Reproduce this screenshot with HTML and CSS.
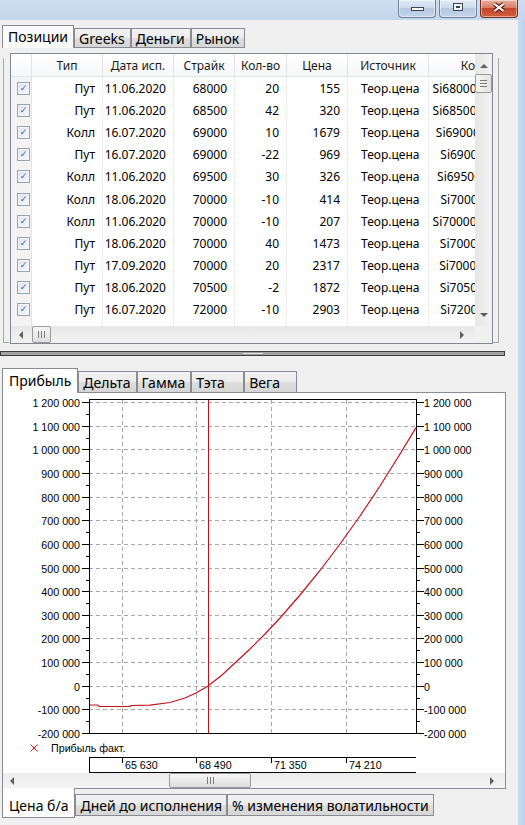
FILE: index.html
```html
<!DOCTYPE html>
<html lang="ru">
<head>
<meta charset="utf-8">
<title>Позиции</title>
<link rel="stylesheet" href="styles.css">
</head>
<body>
<div class="window">
  <div class="titlebar">
    <div class="wbtn"><span class="ico-min"></span></div>
    <div class="wbtn"><span class="ico-max"></span></div>
    <div class="wbtn close">
      <svg width="16" height="11" viewBox="0 0 16 11"><path d="M3.5 2 L12.5 9 M12.5 2 L3.5 9" stroke="#5b1c12" stroke-width="4.2" fill="none"/><path d="M3.5 2 L12.5 9 M12.5 2 L3.5 9" stroke="#fff" stroke-width="2.2" fill="none"/></svg>
    </div>
  </div>
  <div class="frame">
    <div class="content">
      <div class="tabstrip ts1">
        <div class="tab active">Позиции</div>
        <div class="tab">Greeks</div>
        <div class="tab">Деньги</div>
        <div class="tab">Рынок</div>
      </div>
      <div class="page1">
        <div class="bracket bl"></div>
        <div class="lv">
          <div class="lv-view">
            <div class="lv-row lv-head">
              <div class="c"></div><div class="c">Тип</div><div class="c">Дата исп.</div><div class="c">Страйк</div><div class="c">Кол-во</div><div class="c">Цена</div><div class="c">Источник</div><div class="c">Код</div>
            </div>
            <div class="lv-row"><div class="c ck"><span class="chk"></span></div><div class="c r">Пут</div><div class="c r">11.06.2020</div><div class="c r">68000</div><div class="c r">20</div><div class="c r">155</div><div class="c l">Теор.цена</div><div class="c m">Si68000BR0A</div></div>
            <div class="lv-row"><div class="c ck"><span class="chk"></span></div><div class="c r">Пут</div><div class="c r">11.06.2020</div><div class="c r">68500</div><div class="c r">42</div><div class="c r">320</div><div class="c l">Теор.цена</div><div class="c m">Si68500BR0A</div></div>
            <div class="lv-row"><div class="c ck"><span class="chk"></span></div><div class="c r">Колл</div><div class="c r">16.07.2020</div><div class="c r">69000</div><div class="c r">10</div><div class="c r">1679</div><div class="c l">Теор.цена</div><div class="c m">Si69000BG0</div></div>
            <div class="lv-row"><div class="c ck"><span class="chk"></span></div><div class="c r">Пут</div><div class="c r">16.07.2020</div><div class="c r">69000</div><div class="c r">-22</div><div class="c r">969</div><div class="c l">Теор.цена</div><div class="c m">Si69000BS</div></div>
            <div class="lv-row"><div class="c ck"><span class="chk"></span></div><div class="c r">Колл</div><div class="c r">11.06.2020</div><div class="c r">69500</div><div class="c r">30</div><div class="c r">326</div><div class="c l">Теор.цена</div><div class="c m">Si69500BF0</div></div>
            <div class="lv-row"><div class="c ck"><span class="chk"></span></div><div class="c r">Колл</div><div class="c r">18.06.2020</div><div class="c r">70000</div><div class="c r">-10</div><div class="c r">414</div><div class="c l">Теор.цена</div><div class="c m">Si70000BF</div></div>
            <div class="lv-row"><div class="c ck"><span class="chk"></span></div><div class="c r">Колл</div><div class="c r">11.06.2020</div><div class="c r">70000</div><div class="c r">-10</div><div class="c r">207</div><div class="c l">Теор.цена</div><div class="c m">Si70000BR0A</div></div>
            <div class="lv-row"><div class="c ck"><span class="chk"></span></div><div class="c r">Пут</div><div class="c r">18.06.2020</div><div class="c r">70000</div><div class="c r">40</div><div class="c r">1473</div><div class="c l">Теор.цена</div><div class="c m">Si70000BR</div></div>
            <div class="lv-row"><div class="c ck"><span class="chk"></span></div><div class="c r">Пут</div><div class="c r">17.09.2020</div><div class="c r">70000</div><div class="c r">20</div><div class="c r">2317</div><div class="c l">Теор.цена</div><div class="c m">Si70000BU</div></div>
            <div class="lv-row"><div class="c ck"><span class="chk"></span></div><div class="c r">Пут</div><div class="c r">18.06.2020</div><div class="c r">70500</div><div class="c r">-2</div><div class="c r">1872</div><div class="c l">Теор.цена</div><div class="c m">Si70500BR</div></div>
            <div class="lv-row"><div class="c ck"><span class="chk"></span></div><div class="c r">Пут</div><div class="c r">16.07.2020</div><div class="c r">72000</div><div class="c r">-10</div><div class="c r">2903</div><div class="c l">Теор.цена</div><div class="c m">Si72000BS</div></div>
            <div class="lv-row"><div class="c ck"><span class="chk"></span></div><div class="c r">Колл</div><div class="c r">16.07.2020</div><div class="c r">72000</div><div class="c r">10</div><div class="c r">611</div><div class="c l">Теор.цена</div><div class="c m">Si72000BG</div></div>
          </div>
          <div class="vscroll">
            <div class="sb-btn up"><span class="arr arr-up"></span></div>
            <div class="thumb-v"><span class="grip-h"></span></div>
            <div class="sb-fill"></div>
            <div class="sb-btn down"><span class="arr arr-down"></span></div>
          </div>
          <div class="hscroll hs1">
            <div class="sb-btn hb"><span class="arr arr-left"></span></div>
            <div class="thumb-h t1"><span class="grip-v"></span></div>
            <div class="sb-fill"></div>
            <div class="sb-btn hb right"><span class="arr arr-right"></span></div>
          </div>
          <div class="corner"></div>
        </div>
        <div class="bracket br"></div>
      </div>
      <div class="splitter"><span class="grip"></span></div>
      <div class="tabstrip ts2">
        <div class="tab active">Прибыль</div>
        <div class="tab">Дельта</div>
        <div class="tab">Гамма</div>
        <div class="tab">Тэта</div>
        <div class="tab">Вега</div>
      </div>
      <div class="page2">
        <svg class="chart" width="502" height="380" viewBox="3 393 502 380">
          <g class="grid" stroke="#a9a9a9" stroke-dasharray="4 3" fill="none">
            <path d="M89 402.5H416M89 426.5H416M89 449.5H416M89 473.5H416M89 497.5H416M89 520.5H416M89 544.5H416M89 568.5H416M89 591.5H416M89 615.5H416M89 638.5H416M89 662.5H416M89 686.5H416M89 709.5H416"/>
            <path d="M122.5 400V733M196.5 400V733M271.5 400V733M346.5 400V733"/>
          </g>
          <g stroke="#000" fill="none" shape-rendering="crispEdges">
            <rect x="89.5" y="399.5" width="327" height="334"/>
            <path d="M82 402.5H89M82 426.5H89M82 449.5H89M82 473.5H89M82 497.5H89M82 520.5H89M82 544.5H89M82 568.5H89M82 591.5H89M82 615.5H89M82 638.5H89M82 662.5H89M82 686.5H89M82 709.5H89M82 733.5H89"/>
            <path d="M86 414.5H89M86 438.5H89M86 461.5H89M86 485.5H89M86 509.5H89M86 532.5H89M86 556.5H89M86 580.5H89M86 603.5H89M86 627.5H89M86 650.5H89M86 674.5H89M86 698.5H89M86 721.5H89"/>
            <path d="M417 402.5H424M417 426.5H424M417 449.5H424M417 473.5H424M417 497.5H424M417 520.5H424M417 544.5H424M417 568.5H424M417 591.5H424M417 615.5H424M417 638.5H424M417 662.5H424M417 686.5H424M417 709.5H424M417 733.5H424"/>
            <path d="M417 414.5H420M417 438.5H420M417 461.5H420M417 485.5H420M417 509.5H420M417 532.5H420M417 556.5H420M417 580.5H420M417 603.5H420M417 627.5H420M417 650.5H420M417 674.5H420M417 698.5H420M417 721.5H420"/>
            <path d="M89 757.5H416M89 772.5H416M89.5 757V773M122.5 758V763M196.5 758V763M271.5 758V763M346.5 758V763"/>
          </g>
          <path d="M208.5 400V733" stroke="#c0141c" stroke-width="1" shape-rendering="crispEdges"/>
          <polyline fill="none" stroke="#c0141c" stroke-width="1.2" points="90,705 98,705 99,706.5 130,706.5 131,705.5 150,705.2 170,702.5 185,698 196,693 208,686 222,675 236,662 250,649 265,634 280,618 300,595 320,570.5 340,544 360,516 380,486 390,470 400,454 416,427.6"/>
          <g class="lbl lbl-l" text-anchor="end">
            <text x="80" y="406.5">1 200 000</text>
            <text x="80" y="430.5">1 100 000</text>
            <text x="80" y="453.5">1 000 000</text>
            <text x="80" y="477.5">900 000</text>
            <text x="80" y="501.5">800 000</text>
            <text x="80" y="524.5">700 000</text>
            <text x="80" y="548.5">600 000</text>
            <text x="80" y="572.5">500 000</text>
            <text x="80" y="595.5">400 000</text>
            <text x="80" y="619.5">300 000</text>
            <text x="80" y="642.5">200 000</text>
            <text x="80" y="666.5">100 000</text>
            <text x="80" y="690.5">0</text>
            <text x="80" y="713.5">-100 000</text>
            <text x="80" y="737.5">-200 000</text>
          </g>
          <g class="lbl lbl-r">
            <text x="424" y="406.5">1 200 000</text>
            <text x="424" y="430.5">1 100 000</text>
            <text x="424" y="453.5">1 000 000</text>
            <text x="424" y="477.5">900 000</text>
            <text x="424" y="501.5">800 000</text>
            <text x="424" y="524.5">700 000</text>
            <text x="424" y="548.5">600 000</text>
            <text x="424" y="572.5">500 000</text>
            <text x="424" y="595.5">400 000</text>
            <text x="424" y="619.5">300 000</text>
            <text x="424" y="642.5">200 000</text>
            <text x="424" y="666.5">100 000</text>
            <text x="424" y="690.5">0</text>
            <text x="424" y="713.5">-100 000</text>
            <text x="424" y="737.5">-200 000</text>
          </g>
          <path d="M30.5 744.5L37.5 751.5M37.5 744.5L30.5 751.5" stroke="#d02020" stroke-width="1"/>
          <g class="lbl">
            <text x="51" y="752">Прибыль факт.</text>
            <text x="125" y="769">65 630</text>
            <text x="199" y="769">68 490</text>
            <text x="274" y="769">71 350</text>
            <text x="349" y="769">74 210</text>
          </g>
        </svg>
        <div class="hscroll hs2">
          <div class="sb-btn hb"><span class="arr arr-left"></span></div>
          <div class="thumb-h t2"><span class="grip-v"></span></div>
          <div class="sb-fill"></div>
          <div class="sb-btn hb right"><span class="arr arr-right"></span></div>
        </div>
      </div>
      <div class="tabstrip ts3">
        <div class="tab active">Цена б/а</div>
        <div class="tab">Дней до исполнения</div>
        <div class="tab">% изменения волатильности</div>
      </div>
    </div>
    <div class="rframe"></div>
  </div>
</div>
</body>
</html>
```
FILE: styles.css
```css
html, body {
  margin: 0;
  padding: 0;
  width: 525px;
  height: 825px;
  overflow: hidden;
  background: #f0f0f0;
}
body {
  font-family: "Noto Sans", "DejaVu Sans", sans-serif;
  color: #000;
}
.window {
  width: 525px;
  height: 825px;
  display: flex;
  flex-direction: column;
}

/* title bar */
.titlebar {
  height: 20px;
  flex: none;
  display: flex;
  justify-content: flex-end;
  gap: 3px;
  padding-right: 7px;
  background: linear-gradient(#cfdff1, #c2d6ec);
}
.wbtn {
  width: 38px;
  height: 18px;
  box-sizing: border-box;
  border: 1px solid #71819a;
  border-top: none;
  border-radius: 0 0 4px 4px;
  display: flex;
  align-items: center;
  justify-content: center;
  background: linear-gradient(#e2ebf6 0%, #cddbec 45%, #b6c9e0 50%, #c3d5ea 100%);
  box-shadow: inset 0 0 0 1px rgba(255,255,255,0.45);
}
.wbtn.close {
  border-color: #7d2a1e;
  background: linear-gradient(#eab0a2 0%, #db7b66 45%, #c6452c 50%, #d0603f 100%);
  align-items: flex-start;
  padding-top: 2px;
}
.ico-min {
  width: 13px;
  height: 4px;
  box-sizing: border-box;
  border: 1px solid #3b4655;
  background: #fff;
  margin-top: 1px;
}
.ico-max {
  width: 10px;
  height: 8px;
  box-sizing: border-box;
  border: 1px solid #3b4655;
  background: linear-gradient(#3b4655, #3b4655) center / 4px 2px no-repeat, #eef3f9;
  margin-bottom: 3px;
}

/* frame */
.frame {
  flex: 1;
  display: flex;
}
.content {
  width: 518px;
  display: flex;
  flex-direction: column;
  background: #f0f0f0;
}
.rframe {
  width: 7px;
  background: linear-gradient(90deg, #c8dbf0, #bcd2ec);
}

/* tabs */
.tabstrip {
  display: flex;
  padding-left: 2px;
  box-sizing: border-box;
  flex: none;
}
.tab {
  box-sizing: border-box;
  border: 1px solid #898c95;
  padding: 0 5px 0 4px;
  min-width: 53px;
  display: flex;
  align-items: center;
  font-size: 14px;
  white-space: nowrap;
  background: linear-gradient(#f3f3f3 0%, #ebebeb 50%, #dedede 51%, #d6d6d6 100%);
}
.tab.active {
  background: #fff;
  position: relative;
  z-index: 1;
  padding: 0 5px;
}
.ts1 {
  height: 28px;
  align-items: flex-end;
}
.ts1 .tab { height: 20px; }
.ts1 .tab.active {
  height: 23px;
  border-bottom: none;
  background: #fbfbfb;
  padding-bottom: 2px;
}
.ts2 {
  height: 36px;
  align-items: flex-end;
}
.ts2 .tab {
  height: 21px;
  border-bottom: none;
}
.ts2 .tab.active {
  height: 25px;
  margin-bottom: -1px;
  padding: 0 6px 2px 6px;
}
.ts3 {
  margin-top: -1px;
  align-items: flex-start;
}
.ts3 .tab {
  height: 22px;
  margin-top: 6px;
  padding: 1px 4px 0 4px;
}
.ts3 .tab.active {
  height: 30px;
  margin-top: 0;
  border-top: none;
  padding: 5px 6px 0 6px;
}

/* page 1 */
.page1 {
  height: 297px;
  box-sizing: border-box;
  padding-top: 5px;
  display: flex;
  align-items: flex-start;
  flex: none;
}
.bracket {
  width: 6px;
  height: 285px;
  margin-top: 5px;
  box-sizing: border-box;
  border-bottom: 1px solid #a7a7a7;
}
.bracket.bl {
  margin-left: 3px;
  margin-right: 1px;
  border-left: 1px solid #a7a7a7;
  width: 6px;
}
.bracket.br {
  border-right: 1px solid #a7a7a7;
}
.lv {
  display: grid;
  grid-template-columns: 464px 17px;
  grid-template-rows: 272px 17px;
  border: 1px solid #828790;
  background: #fff;
  flex: none;
}
.lv-view {
  overflow: hidden;
  font-size: 12px;
}
.lv-row {
  display: grid;
  grid-template-columns: 21px 71px 71px 61px 52px 61px 81px 86px;
  height: 22.2px;
  width: 504px;
}
.lv-row .c {
  box-sizing: border-box;
  border-right: 1px solid #eeeeee;
  display: flex;
  align-items: center;
  white-space: nowrap;
  overflow: hidden;
}
.lv-head {
  height: 23px;
  background: linear-gradient(#ffffff, #f6f7f9);
  border-bottom: 1px solid #e2e4e8;
  box-sizing: border-box;
}
.lv-head .c {
  justify-content: center;
  border-right-color: #e1e3e6;
  color: #1a1a1a;
}
.c.r { justify-content: flex-end; padding-right: 7px; }
.c.l { justify-content: flex-start; padding-left: 13px; }
.c.m { justify-content: center; padding-right: 4px; }
.c.ck {
  justify-content: flex-end;
  padding-right: 1px;
  background: #f3f3f3;
  border-right-color: #e3e3e3;
}
.chk {
  width: 13px;
  height: 13px;
  box-sizing: border-box;
  border: 1px solid #97a2b5;
  background: linear-gradient(135deg, #dde2ea, #f8f9fb);
  box-shadow: inset 0 0 0 1px #f4f5f8;
  display: flex;
  align-items: center;
  justify-content: center;
}
.chk::after {
  content: "✓";
  font: bold 9px "DejaVu Sans", sans-serif;
  color: #3f5fa8;
  line-height: 1;
}

/* scrollbars */
.vscroll {
  display: flex;
  flex-direction: column;
  background: linear-gradient(90deg, #e6e6e6, #f3f3f3);
}
.hscroll {
  display: flex;
  background: linear-gradient(#e7e7e7, #f3f3f3);
}
.hs1 { height: 17px; }
.hs2 { height: 15px; flex: none; background: linear-gradient(#ececec, #f4f4f4); }
.sb-btn {
  display: flex;
  align-items: center;
  justify-content: center;
  flex: none;
}
.sb-btn.up { height: 20px; padding-top: 4px; box-sizing: border-box; }
.sb-btn.down { height: 20px; padding-bottom: 3px; box-sizing: border-box; }
.sb-btn.hb { width: 17px; }
.sb-btn.hb.right { justify-content: flex-start; padding-left: 2px; box-sizing: border-box; }
.hs1 .sb-btn.hb:first-child { justify-content: flex-end; padding-right: 5px; box-sizing: border-box; }
.sb-fill { flex: 1; }
.arr {
  width: 0;
  height: 0;
  border-style: solid;
  border-color: transparent;
}
.arr-up { border-width: 0 4px 4px 4px; border-bottom-color: #606060; }
.arr-down { border-width: 4px 4px 0 4px; border-top-color: #606060; }
.arr-left { border-width: 4px 4px 4px 0; border-right-color: #606060; }
.arr-right { border-width: 4px 0 4px 4px; border-left-color: #606060; }
.thumb-v {
  height: 19px;
  box-sizing: border-box;
  border: 1px solid #9a9a9a;
  border-radius: 2px;
  background: linear-gradient(90deg, #f5f5f5, #e2e2e2);
  display: flex;
  align-items: center;
  justify-content: center;
  flex: none;
}
.thumb-h {
  box-sizing: border-box;
  border: 1px solid #9a9a9a;
  border-radius: 2px;
  background: linear-gradient(#f6f6f6, #dedede);
  display: flex;
  align-items: center;
  justify-content: center;
  flex: none;
}
.thumb-h.t1 { width: 19px; margin-left: 4px; }
.thumb-h.t2 { width: 82px; margin-left: 149px; }
.grip-h {
  width: 7px;
  height: 7px;
  background: repeating-linear-gradient(#7c7c7c 0 1px, transparent 1px 3px);
}
.grip-v {
  width: 7px;
  height: 7px;
  background: repeating-linear-gradient(90deg, #7c7c7c 0 1px, transparent 1px 3px);
}
.corner { background: #f0f0f0; }

/* splitter */
.splitter {
  margin-top: 6px;
  width: 505px;
  height: 5px;
  box-sizing: border-box;
  border: 1px solid #3e3e3e;
  background: #a3a3a3;
  display: flex;
  align-items: center;
  justify-content: center;
  flex: none;
}
.grip {
  width: 20px;
  height: 1px;
  background: #dcdcdc;
}

/* page 2 */
.page2 {
  margin-left: 2px;
  width: 504px;
  height: 397px;
  box-sizing: border-box;
  border: 1px solid #898c95;
  background: #fff;
  display: flex;
  flex-direction: column;
  flex: none;
}
.chart {
  display: block;
  flex: none;
}
.lbl {
  font-family: "Liberation Sans", Arial, sans-serif;
  font-size: 10.7px;
  fill: #000;
}
```
